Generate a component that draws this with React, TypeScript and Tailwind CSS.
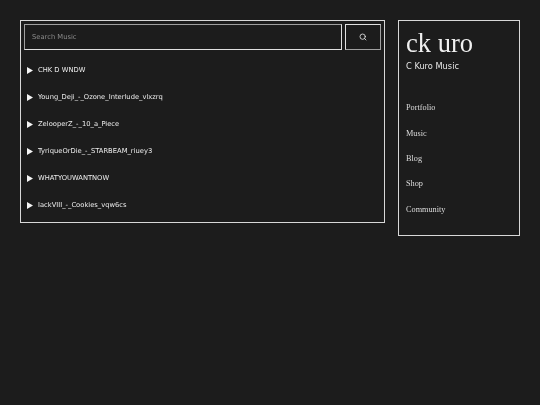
import { Search } from 'lucide-react';

const tracks = [
  'CHK D WNDW',
  'Young_Deji_-_Ozone_Interlude_vlxzrq',
  'ZelooperZ_-_10_a_Piece',
  'TyriqueOrDie_-_STARBEAM_riuey3',
  'WHATYOUWANTNOW',
  'lackVIII_-_Cookies_vqw6cs',
];

const links = ['Portfolio', 'Music', 'Blog', 'Shop', 'Community'];

export default function App() {
  return (
    <div className="min-h-[405px] bg-[#1c1c1c] text-[#e5e5e5] flex items-start gap-[13px] pl-5 pr-5 pt-5 font-['DejaVu_Sans',sans-serif]">
      <main className="w-[365px] h-[203px] shrink-0 border-[1.5px] border-[#d8d8d8] p-[3px] will-change-transform">
        <form className="flex gap-[3px]">
          <input
            type="text"
            placeholder="Search Music"
            className="w-[318px] h-[26px] bg-transparent border-[1.5px] border-t-[#a0a0a0] border-l-[#a0a0a0] border-r-[#e0e0e0] border-b-[#e0e0e0] px-[7px] text-[6.75px] placeholder:text-[#8a8a8a] outline-none"
          />
          <button type="button" className="w-9 h-[26px] border-[1.5px] border-t-[#e0e0e0] border-l-[#e0e0e0] border-r-[#a0a0a0] border-b-[#a0a0a0] flex items-center justify-center pb-[1px]">
            <Search size={8} strokeWidth={2.5} className="text-[#e5e5e5]" />
          </button>
        </form>
        <ul className="mt-[7px] pl-[3px]">
          {tracks.map((t) => (
            <li key={t} className="h-[27px] flex items-center gap-[5px] text-[6.75px] text-[#ececec]">
              <svg width="6" height="7" viewBox="0 0 6 7" className="shrink-0">
                <path d="M0 0L6 3.5L0 7Z" fill="#f5f5f5" />
              </svg>
              <span>{t}</span>
            </li>
          ))}
        </ul>
      </main>
      <aside className="w-[122px] h-[216px] shrink-0 border-[1.5px] border-[#d8d8d8] px-[7px] pt-[7px] will-change-transform">
        <h1 className="font-['Liberation_Serif',serif] text-[26.5px] leading-[30px] text-[#f0f0f0]">ck uro</h1>
        <p className="mt-[1px] text-[8.25px] leading-[14px] text-[#e5e5e5]">C Kuro Music</p>
        <nav className="mt-[23px] flex flex-col">
          {links.map((l) => (
            <a key={l} className="h-[25.3px] flex items-center font-['Liberation_Serif',serif] text-[8.25px] text-[#dddddd]">
              {l}
            </a>
          ))}
        </nav>
      </aside>
    </div>
  );
}
